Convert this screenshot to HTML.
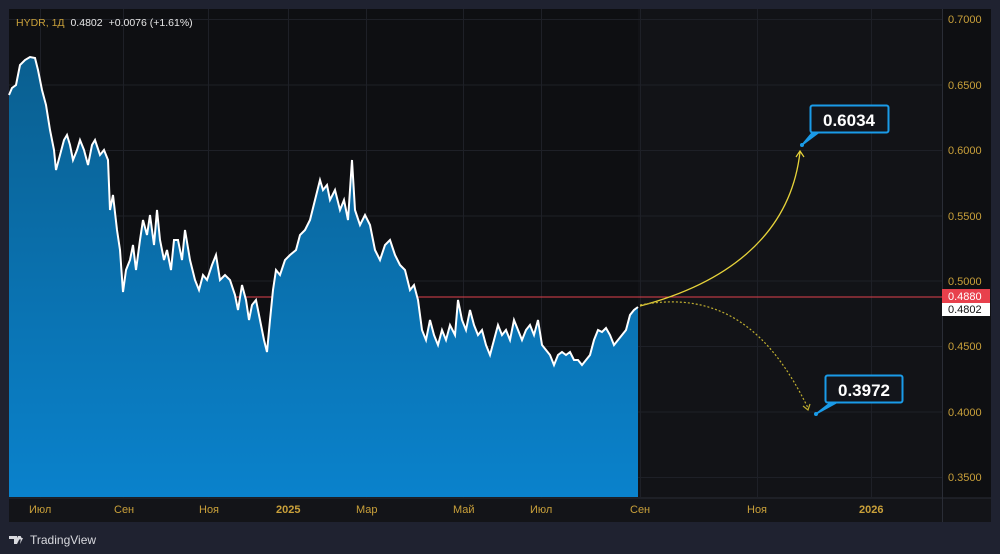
<!DOCTYPE html>
<html><head><meta charset="utf-8"><style>
body{margin:0;background:#1f2230;width:1000px;height:554px;overflow:hidden;font-family:"Liberation Sans",sans-serif}
</style></head><body>
<svg width="1000" height="554" xmlns="http://www.w3.org/2000/svg" style="position:absolute;left:0;top:0">
<rect x="0" y="0" width="1000" height="554" fill="#1f2230"/>
<rect x="9" y="9" width="982" height="513" fill="#0e0f12"/>
<rect x="638" y="9" width="304" height="489" fill="#121317"/>
<rect x="9" y="498" width="982" height="24" fill="#131418"/>
<line x1="9" y1="498" x2="991" y2="498" stroke="#2a2d36"/>
<line x1="942.5" y1="9" x2="942.5" y2="522" stroke="#2a2d36"/>
<g stroke="#1e2027" stroke-width="1">
<line x1="9" x2="942" y1="19.5" y2="19.5"/><line x1="9" x2="942" y1="85" y2="85"/><line x1="9" x2="942" y1="150.5" y2="150.5"/><line x1="9" x2="942" y1="216" y2="216"/><line x1="9" x2="942" y1="281" y2="281"/><line x1="9" x2="942" y1="346.5" y2="346.5"/><line x1="9" x2="942" y1="412" y2="412"/><line x1="9" x2="942" y1="477.5" y2="477.5"/>
<line y1="9" y2="498" x1="40.5" x2="40.5"/><line y1="9" y2="498" x1="123.5" x2="123.5"/><line y1="9" y2="498" x1="208.5" x2="208.5"/><line y1="9" y2="498" x1="288.5" x2="288.5"/><line y1="9" y2="498" x1="366.5" x2="366.5"/><line y1="9" y2="498" x1="463.5" x2="463.5"/><line y1="9" y2="498" x1="541.5" x2="541.5"/><line y1="9" y2="498" x1="640.5" x2="640.5"/><line y1="9" y2="498" x1="757.5" x2="757.5"/><line y1="9" y2="498" x1="871.5" x2="871.5"/>
</g>
<line x1="9" y1="297" x2="942" y2="297" stroke="#e0404c" stroke-width="1"/>
<defs><linearGradient id="g" x1="0" y1="0" x2="0" y2="1"><stop offset="0" stop-color="#0a5f90"/><stop offset="1" stop-color="#0a82cc"/></linearGradient></defs>
<path id="p" d="M9,95 L12,88 16,85 20,65 25,60 30,57 35,58 38,70 42,90 46,105 50,130 54,150 56,170 60,155 64,140 67,135 70,145 73,160 77,150 80,140 84,150 88,165 92,145 95,140 100,155 104,150 108,160 110,210 113,195 117,230 120,250 123,292 126,270 130,260 133,245 136,270 140,240 143,220 147,235 150,215 154,245 157,210 160,240 164,260 167,250 171,270 174,240 178,240 182,260 185,230 190,260 195,280 199,290 203,275 207,280 212,265 216,255 220,280 225,275 230,280 235,295 238,310 242,285 246,300 249,320 252,305 256,300 260,320 264,340 267,352 270,320 273,290 276,270 280,275 285,260 290,255 296,250 300,235 305,230 310,220 315,200 320,180 323,190 327,185 330,200 335,190 340,210 344,200 348,220 352,160 355,210 360,225 365,215 370,225 375,250 380,260 385,245 390,240 395,255 400,265 405,270 410,290 414,285 418,300 422,330 426,340 430,320 434,335 438,345 442,330 446,340 450,325 455,335 458,300 462,320 466,330 470,310 474,325 478,335 482,330 486,345 490,355 494,340 498,325 502,335 506,330 510,340 514,320 518,330 522,340 526,330 530,325 534,335 538,320 542,345 546,350 550,355 554,365 558,355 562,352 566,355 570,352 574,360 578,360 582,365 586,360 590,355 594,340 598,330 602,332 606,328 610,335 614,345 618,340 622,335 626,330 630,315 634,310 638,307" fill="none"/>
<path d="M9,95 L12,88 16,85 20,65 25,60 30,57 35,58 38,70 42,90 46,105 50,130 54,150 56,170 60,155 64,140 67,135 70,145 73,160 77,150 80,140 84,150 88,165 92,145 95,140 100,155 104,150 108,160 110,210 113,195 117,230 120,250 123,292 126,270 130,260 133,245 136,270 140,240 143,220 147,235 150,215 154,245 157,210 160,240 164,260 167,250 171,270 174,240 178,240 182,260 185,230 190,260 195,280 199,290 203,275 207,280 212,265 216,255 220,280 225,275 230,280 235,295 238,310 242,285 246,300 249,320 252,305 256,300 260,320 264,340 267,352 270,320 273,290 276,270 280,275 285,260 290,255 296,250 300,235 305,230 310,220 315,200 320,180 323,190 327,185 330,200 335,190 340,210 344,200 348,220 352,160 355,210 360,225 365,215 370,225 375,250 380,260 385,245 390,240 395,255 400,265 405,270 410,290 414,285 418,300 422,330 426,340 430,320 434,335 438,345 442,330 446,340 450,325 455,335 458,300 462,320 466,330 470,310 474,325 478,335 482,330 486,345 490,355 494,340 498,325 502,335 506,330 510,340 514,320 518,330 522,340 526,330 530,325 534,335 538,320 542,345 546,350 550,355 554,365 558,355 562,352 566,355 570,352 574,360 578,360 582,365 586,360 590,355 594,340 598,330 602,332 606,328 610,335 614,345 618,340 622,335 626,330 630,315 634,310 638,307 L638,497 L9,497 Z" fill="url(#g)"/>
<use href="#p" stroke="#fff" stroke-width="2"/>
<path d="M640,306 C720,285 790,240 800,152" fill="none" stroke="#e6d23a" stroke-width="1.3"/>
<path d="M796,157 L800,151 L804,157" fill="none" stroke="#e6d23a" stroke-width="1.2"/>
<path d="M640,305 C720,290 770,330 808,408" fill="none" stroke="#bfae30" stroke-width="1.2" stroke-dasharray="2,2"/>
<path d="M803,406 L808,410 L810,404" fill="none" stroke="#bfae30" stroke-width="1.2"/>
<path d="M802,145 L812,133 L818,133 Z" fill="#1a9be8" stroke="#1a9be8" stroke-width="1.5"/>
<circle cx="802" cy="145" r="2" fill="#1a9be8"/>
<rect x="810.5" y="105.5" width="78" height="27" rx="2" fill="#13151b" stroke="#1a9be8" stroke-width="2"/>
<text x="849" y="126" fill="#fff" font-size="17" font-weight="bold" text-anchor="middle">0.6034</text>
<path d="M816,414 L830,403 L836,403 Z" fill="#1a9be8" stroke="#1a9be8" stroke-width="1.5"/>
<circle cx="816" cy="414" r="2" fill="#1a9be8"/>
<rect x="825.5" y="375.5" width="77" height="27" rx="2" fill="#13151b" stroke="#1a9be8" stroke-width="2"/>
<text x="864" y="396" fill="#fff" font-size="17" font-weight="bold" text-anchor="middle">0.3972</text>
<g fill="#c9a03a" font-size="11">
<text x="948" y="23">0.7000</text><text x="948" y="89">0.6500</text><text x="948" y="154">0.6000</text><text x="948" y="220">0.5500</text><text x="948" y="285">0.5000</text><text x="948" y="350">0.4500</text><text x="948" y="416">0.4000</text><text x="948" y="481">0.3500</text>
<text x="29" y="513">Июл</text><text x="114" y="513">Сен</text><text x="199" y="513">Ноя</text><text x="276" y="513" font-weight="bold">2025</text><text x="356" y="513">Мар</text><text x="453" y="513">Май</text><text x="530" y="513">Июл</text><text x="630" y="513">Сен</text><text x="747" y="513">Ноя</text><text x="859" y="513" font-weight="bold">2026</text>
</g>
<rect x="942" y="289" width="48" height="14" fill="#e8404c"/>
<text x="948" y="300" fill="#fff" font-size="11">0.4880</text>
<rect x="942" y="303" width="48" height="13" fill="#fff"/>
<text x="948" y="313" fill="#111" font-size="11">0.4802</text>
<text x="16" y="26" font-size="10.5" fill="#c9a03a">HYDR, 1Д <tspan fill="#e8e8e8" dx="3">0.4802</tspan><tspan fill="#e8e8e8" dx="6">+0.0076 (+1.61%)</tspan></text>
<path d="M9,536 h8 v8 h-3 v-5 h-5 z M18,536 h3 l-4,8 h-3 z M21,538 l2,0 -3,6" fill="#d8d9de"/>
<circle cx="20" cy="538" r="1.5" fill="#d8d9de"/>
<text x="30" y="544" fill="#d8d9de" font-size="12">TradingView</text>
</svg>
</body></html>
